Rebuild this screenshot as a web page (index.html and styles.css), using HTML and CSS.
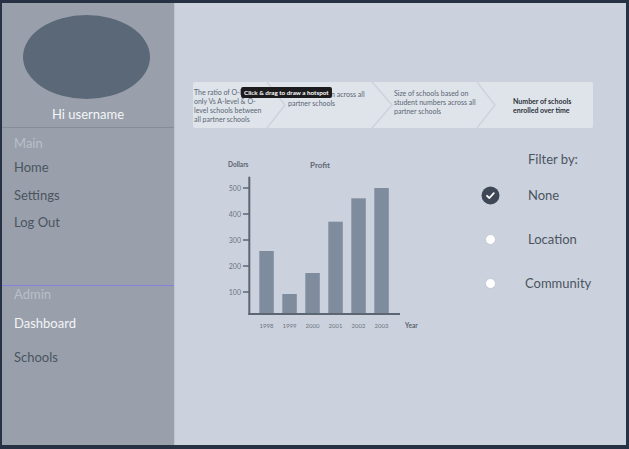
FILE: index.html
```html
<!DOCTYPE html>
<html lang="en">
<head>
    <meta charset="UTF-8">
    <meta name="viewport" content="width=device-width, initial-scale=1.0">
    <title>Dashboard</title>
    <link rel="stylesheet" href="styles.css">
</head>
<body>

<div class="app">

    <!-- Sidebar -->
    <aside class="sidebar">
        <div class="avatar"></div>
        <div class="greeting">Hi username</div>

        <div class="nav-title">Main</div>
        <ul class="nav-list">
            <li>Home</li>
            <li>Settings</li>
            <li>Log Out</li>
        </ul>

        <div class="nav-title nav-title-admin">Admin</div>
        <div class="nav-link active">Dashboard</div>
        <div class="nav-link nav-link-last">Schools</div>
    </aside>

    <!-- Contenuto principale -->
    <main class="main">

        <div class="steps">
            <div class="step step-1">The ratio of O-level<br>only Vs A-level &amp; O-<br>level schools between<br>all partner schools</div>
            <div class="step step-2">School location across all<br>partner schools</div>
            <div class="step step-3">Size of schools based on<br>student numbers across all<br>partner schools</div>
            <div class="step step-4">Number of schools<br>enrolled over time</div>

            <svg class="chevrons" width="400" height="46" viewBox="0 0 400 46">
                <polyline points="74,0 92,23 74,46" />
                <polyline points="179,0 199,23 179,46" />
                <polyline points="284,0 302,23 284,46" />
            </svg>

            <div class="hotspot-tip">Click &amp; drag to draw a hotspot</div>
        </div>

        <div class="content-row">
            <!-- Grafico profitti -->
            <svg class="chart" width="240" height="190" viewBox="0 0 240 190">
                <text class="axis-title" x="35" y="16.5">Dollars</text>
                <text class="chart-title" x="117" y="18">Profit</text>

                <g class="ticks">
                    <line x1="50" y1="38" x2="56" y2="38" />
                    <line x1="50" y1="64" x2="56" y2="64" />
                    <line x1="50" y1="90" x2="56" y2="90" />
                    <line x1="50" y1="116" x2="56" y2="116" />
                    <line x1="50" y1="142" x2="56" y2="142" />
                </g>
                <g class="tick-labels">
                    <text x="48" y="40.5">500</text>
                    <text x="48" y="66.5">400</text>
                    <text x="48" y="92.5">300</text>
                    <text x="48" y="118.5">200</text>
                    <text x="48" y="144.5">100</text>
                </g>

                <g class="bars">
                    <rect x="66.3" y="101" width="14.5" height="63" />
                    <rect x="89.3" y="144" width="14.5" height="20" />
                    <rect x="112.3" y="123" width="14.5" height="41" />
                    <rect x="135.3" y="71.7" width="14.5" height="92.3" />
                    <rect x="158.3" y="48.3" width="14.5" height="115.7" />
                    <rect x="181.3" y="38" width="14.5" height="126" />
                </g>

                <line class="axis" x1="56.3" y1="26.7" x2="56.3" y2="165" />
                <line class="axis" x1="55.3" y1="164" x2="207" y2="164" />

                <g class="year-labels">
                    <text x="73.5" y="177.5">1998</text>
                    <text x="96.5" y="177.5">1999</text>
                    <text x="119.5" y="177.5">2000</text>
                    <text x="142.5" y="177.5">2001</text>
                    <text x="165.5" y="177.5">2002</text>
                    <text x="188.5" y="177.5">2003</text>
                </g>
                <text class="axis-title" x="212" y="177.5">Year</text>
            </svg>

            <!-- Filtri -->
            <div class="filter">
                <div class="filter-title">Filter by:</div>
                <div class="filter-option">
                    <span class="option-icon">
                        <svg width="19" height="19" viewBox="0 0 19 19">
                            <circle cx="9.5" cy="9.5" r="9" fill="#3e4755" />
                            <polyline points="6,9.8 8.4,12 12.8,7.2" fill="none" stroke="#fff" stroke-width="1.8" stroke-linecap="round" stroke-linejoin="round" />
                        </svg>
                    </span>
                    <span class="option-label">None</span>
                </div>
                <div class="filter-option">
                    <span class="option-icon"><span class="radio"></span></span>
                    <span class="option-label">Location</span>
                </div>
                <div class="filter-option">
                    <span class="option-icon"><span class="radio"></span></span>
                    <span class="option-label option-label-shift">Community</span>
                </div>
            </div>
        </div>

    </main>

</div>

</body>
</html>
```

FILE: styles.css
```css
/* Stili di base */
body {
    margin: 0;
    padding: 0;
    background-color: #263243;
    font-family: Lato, "Open Sans", sans-serif;
}

.app {
    display: flex;
    width: 624px;
    height: 442px;
    margin: 3px 0 0 2px;
    background-color: #ccd2dd;
    overflow: hidden;
}

/* Sidebar */
.sidebar {
    width: 172px;
    flex-shrink: 0;
    background-color: #99a0ab;
    border-right: 1px solid #bfc5cf;
}

.avatar {
    width: 127px;
    height: 84px;
    margin: 12px 0 0 21px;
    border-radius: 50%;
    background-color: #5a6877;
}

.greeting {
    margin-top: 3px;
    padding-bottom: 1px;
    line-height: 24px;
    font-size: 13px;
    color: #f4f5f7;
    text-align: center;
    border-bottom: 1px solid #868d98;
}

.nav-title {
    margin-top: 5px;
    padding-left: 12px;
    line-height: 20px;
    font-size: 13px;
    color: #b9bfc8;
}

.nav-list {
    list-style: none;
    margin: 1px 0 0 0;
    padding: 0;
}

.nav-list li {
    padding-left: 12px;
    line-height: 27.5px;
    font-size: 13px;
    color: #4b5461;
}

.nav-title-admin {
    margin-top: 48px;
    border-top: 1px solid #8581dc;
    line-height: 16px;
}

.nav-link {
    margin-top: 6px;
    padding-left: 12px;
    line-height: 30px;
    font-size: 13px;
    color: #4b5461;
}

.nav-link.active {
    color: #f3f4f6;
}

.nav-link-last {
    margin-top: 4px;
}

/* Contenuto principale */
.main {
    flex: 1;
    padding: 79px 0 0 18px;
}

.steps {
    position: relative;
    display: flex;
    width: 400px;
    height: 46px;
    background-color: #dfe4eb;
    border-radius: 2px;
}

.step {
    font-size: 7px;
    line-height: 9px;
    color: #5a6472;
    white-space: nowrap;
}

.step-1 {
    width: 94px;
    padding: 6px 0 0 1px;
}

.step-2 {
    width: 106px;
    padding-top: 8px;
}

.step-3 {
    width: 119px;
    padding-top: 7px;
}

.step-4 {
    flex: 1;
    padding-top: 15px;
    font-weight: bold;
    color: #2d3138;
}

.chevrons {
    position: absolute;
    top: 0;
    left: 0;
}

.chevrons polyline {
    fill: none;
    stroke: #cdd3dc;
    stroke-width: 1.5;
}

.hotspot-tip {
    position: absolute;
    top: 5px;
    left: 48px;
    padding: 0 3px;
    height: 11px;
    line-height: 11px;
    background-color: #1c1c1e;
    border-radius: 2px;
    color: #fff;
    font-size: 6.3px;
    font-weight: bold;
    white-space: nowrap;
}

.content-row {
    display: flex;
    margin-top: 22px;
}

/* Grafico */
.chart {
    display: block;
    flex-shrink: 0;
}

.chart text {
    font-family: Lato, sans-serif;
}

.axis-title {
    font-size: 6.5px;
    font-weight: bold;
    fill: #5a6270;
}

.chart-title {
    font-size: 8px;
    font-weight: bold;
    fill: #5f6875;
}

.ticks line {
    stroke: #5c6673;
    stroke-width: 1.5;
}

.tick-labels text {
    font-size: 7px;
    fill: #6b7480;
    text-anchor: end;
}

.bars rect {
    fill: #7f8c9e;
}

.axis {
    stroke: #5c6673;
    stroke-width: 2;
}

.year-labels text {
    font-size: 6px;
    fill: #6b7480;
    text-anchor: middle;
}

/* Filtri */
.filter {
    margin-left: 48px;
}

.filter-title {
    padding-left: 47px;
    line-height: 18px;
    font-size: 13px;
    color: #4b5461;
}

.filter-title + .filter-option {
    margin-top: 5px;
}

.filter-option {
    display: flex;
    align-items: center;
    height: 44px;
}

.option-icon {
    display: flex;
    align-items: center;
    justify-content: center;
    width: 19px;
    height: 19px;
}

.radio {
    width: 9px;
    height: 9px;
    border-radius: 50%;
    background-color: #fff;
    border: 0.5px solid #c3c9d2;
}

.option-label {
    margin-left: 28px;
    font-size: 13px;
    color: #4b5461;
}

.option-label-shift {
    margin-left: 25px;
}
```
